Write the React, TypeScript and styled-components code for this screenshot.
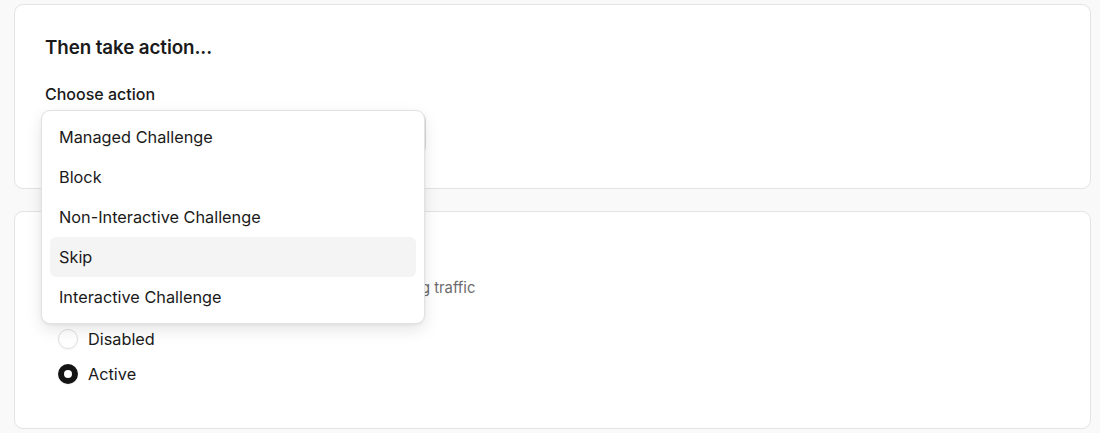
import React from "react";
import styled, { createGlobalStyle } from "styled-components";

const GlobalStyle = createGlobalStyle`
  html, body {
    margin: 0;
    background: #f9f9f9;
    font-family: Inter, "Liberation Sans", sans-serif;
    color: #1a1a1a;
  }
  * { box-sizing: border-box; }
`;

const Page = styled.div`
  display: flex;
  flex-direction: column;
  gap: 22px;
  padding: 4px 9px 0 14px;
`;

const Card = styled.section<{ $padBottom: number }>`
  background: #fff;
  border: 1px solid #e3e3e3;
  border-radius: 9px;
  padding: 30px 30px ${(p) => p.$padBottom}px;
  display: flex;
  flex-direction: column;
`;

const Title = styled.h2`
  margin: 0;
  font-size: 18.8px;
  line-height: 26px;
  font-weight: 600;
  letter-spacing: -0.1px;
`;

const Label = styled.div`
  margin-top: 22px;
  font-size: 16px;
  line-height: 22px;
  font-weight: 500;
`;

const Field = styled.div`
  position: relative;
  margin-top: 7px;
  width: 381px;
`;

const Trigger = styled.div`
  height: 43px;
  border: 1px solid #dedede;
  border-radius: 8px;
  background: #fff;
`;

const Menu = styled.ul`
  position: absolute;
  top: -2px;
  left: -4px;
  width: 384px;
  margin: 0;
  padding: 6px 8px;
  list-style: none;
  background: #fff;
  border: 1px solid #e2e2e2;
  border-radius: 9px;
  box-shadow: 0 6px 16px rgba(0, 0, 0, 0.1), 0 1px 3px rgba(0, 0, 0, 0.06);
  z-index: 10;
`;

const Item = styled.li<{ $active?: boolean }>`
  height: 40px;
  display: flex;
  align-items: center;
  padding-left: 9px;
  font-size: 16.3px;
  border-radius: 6px;
  background: ${(p) => (p.$active ? "#f4f4f4" : "transparent")};
`;

const Description = styled.p`
  margin: 9px 0 0;
  font-size: 14.8px;
  line-height: 22px;
  color: #6b6b6b;
`;

const RadioGroup = styled.div`
  display: flex;
  flex-direction: column;
  gap: 15px;
  margin-top: 30px;
  padding-left: 13px;
`;

const RadioRow = styled.label`
  display: flex;
  align-items: center;
  gap: 10px;
  font-size: 16.3px;
  line-height: 20px;
`;

const RadioDot = styled.span<{ $checked?: boolean }>`
  width: 20px;
  height: 20px;
  border-radius: 50%;
  background: #fff;
  border: ${(p) => (p.$checked ? "6px solid #141414" : "1px solid #e0e0e0")};
  box-shadow: 0 1px 2px rgba(0, 0, 0, 0.05);
`;

const actions = [
  "Managed Challenge",
  "Block",
  "Non-Interactive Challenge",
  "Skip",
  "Interactive Challenge",
];

export default function App() {
  return (
    <>
      <GlobalStyle />
      <Page>
        <Card $padBottom={33}>
          <Title>Then take action...</Title>
          <Label>Choose action</Label>
          <Field>
            <Trigger />
            <Menu>
              {actions.map((a) => (
                <Item key={a} $active={a === "Skip"}>
                  {a}
                </Item>
              ))}
            </Menu>
          </Field>
        </Card>
        <Card $padBottom={44}>
          <Title>Rule status</Title>
          <Description>Choose whether this rule would be applied to matching traffic</Description>
          <RadioGroup>
            <RadioRow>
              <RadioDot />
              Disabled
            </RadioRow>
            <RadioRow>
              <RadioDot $checked />
              Active
            </RadioRow>
          </RadioGroup>
        </Card>
      </Page>
    </>
  );
}
